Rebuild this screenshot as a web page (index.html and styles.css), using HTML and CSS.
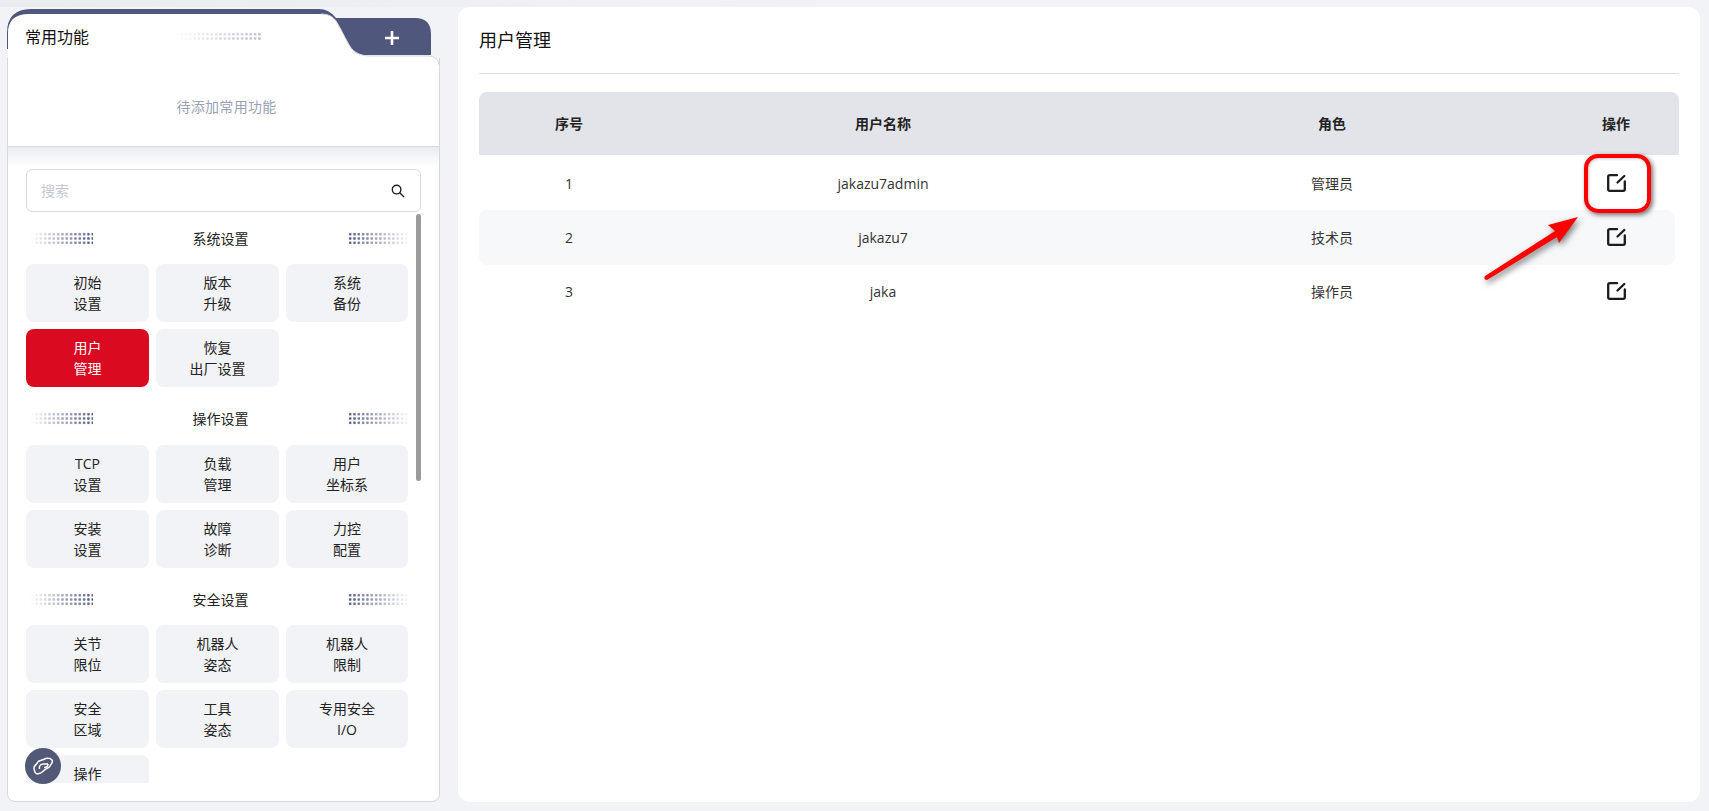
FILE: index.html
```html
<!DOCTYPE html>
<html lang="zh-CN">
<head>
<meta charset="utf-8">
<title>用户管理</title>
<link rel="stylesheet" href="styles.css">
</head>
<body>
<aside class="side">
  <header class="tabs">
    <svg class="tab-shape" width="433" height="56" viewBox="0 0 433 56" aria-hidden="true">
      <path class="tab-dark" d="M0 24Q0 0 24 0H312Q322 0 329 9H408Q424 9 424 25V46H340V40H0Z"/>
      <path class="tab-white" d="M1 56V24Q1 5 22 5H314C322 5 326 8 329 12C334 20 337 27 341 34C345 42 351 47 364 47H420Q432 47 432 56Z"/>
      <path class="tab-edge" d="M314 5C322 5 326 8 329 12C334 20 337 27 341 34C345 42 351 47 364 47H420Q432 47 432 56"/>
      <path class="tab-plus" d="M378 29H392M385 22V36"/>
    </svg>
    <span class="tab-label">常用功能</span>
    <span class="dots dots-tab"></span>
  </header>
  <div class="favs">待添加常用功能</div>
  <div class="menu">
    <div class="search">
      <span class="search-ph">搜索</span>
      <svg class="search-icon" width="14" height="14" viewBox="0 0 14 14" aria-hidden="true"><circle cx="5.6" cy="5.6" r="4.3"/><path d="M8.8 8.8L13 13"/></svg>
    </div>
    <div class="list">
      <section class="group">
        <h3 class="group-title"><span class="dots dots-l"></span><span>系统设置</span><span class="dots dots-r"></span></h3>
        <div class="grid">
          <a class="tile">初始<br>设置</a><a class="tile">版本<br>升级</a><a class="tile">系统<br>备份</a>
          <a class="tile tile-on">用户<br>管理</a><a class="tile">恢复<br>出厂设置</a>
        </div>
      </section>
      <section class="group">
        <h3 class="group-title"><span class="dots dots-l"></span><span>操作设置</span><span class="dots dots-r"></span></h3>
        <div class="grid">
          <a class="tile">TCP<br>设置</a><a class="tile">负载<br>管理</a><a class="tile">用户<br>坐标系</a>
          <a class="tile">安装<br>设置</a><a class="tile">故障<br>诊断</a><a class="tile">力控<br>配置</a>
        </div>
      </section>
      <section class="group">
        <h3 class="group-title"><span class="dots dots-l"></span><span>安全设置</span><span class="dots dots-r"></span></h3>
        <div class="grid">
          <a class="tile">关节<br>限位</a><a class="tile">机器人<br>姿态</a><a class="tile">机器人<br>限制</a>
          <a class="tile">安全<br>区域</a><a class="tile">工具<br>姿态</a><a class="tile">专用安全<br>I/O</a>
          <a class="tile">操作<br>&nbsp;</a>
        </div>
      </section>
      <span class="thumb"></span>
    </div>
    <button class="fab" aria-label="link">
      <svg width="21" height="18" viewBox="0 0 21 18" aria-hidden="true">
        <path d="M1 11.500C.5 8.500 3.500 8 4.500 5.500C5.500 3 8.500 3.500 10.500 2.500C13 1 17 .5 19 3C20.500 5.500 18 7 17 9C16 11.500 13.500 11 11.500 13C9.500 15 6 17.500 3 16.500C1.500 15.500 1.300 13.500 1 11.500Z"/>
        <path d="M6.500 12C5.800 9 7.500 7 10.500 7H15M15 7C15 9.500 13.500 10.500 11 10.500"/>
      </svg>
    </button>
  </div>
</aside>

<main class="main">
  <h1 class="title">用户管理</h1>
  <div class="table">
    <div class="row row-head"><span>序号</span><span>用户名称</span><span>角色</span><span>操作</span></div>
    <div class="row"><span>1</span><span>jakazu7admin</span><span>管理员</span>
      <svg class="edit" width="19" height="18" viewBox="0 0 19 18" aria-hidden="true"><path d="M10 1.200H2.700Q1.200 1.200 1.200 2.700V15.300Q1.200 16.800 2.700 16.800H16.300Q17.800 16.800 17.800 15.300V7.500"/><path d="M10.500 8.500L17.300 2"/></svg></div>
    <div class="row row-alt"><span>2</span><span>jakazu7</span><span>技术员</span>
      <svg class="edit" width="19" height="18" viewBox="0 0 19 18" aria-hidden="true"><path d="M10 1.200H2.700Q1.200 1.200 1.200 2.700V15.300Q1.200 16.800 2.700 16.800H16.300Q17.800 16.800 17.800 15.300V7.500"/><path d="M10.500 8.500L17.300 2"/></svg></div>
    <div class="row row-last"><span>3</span><span>jaka</span><span>操作员</span>
      <svg class="edit" width="19" height="18" viewBox="0 0 19 18" aria-hidden="true"><path d="M10 1.200H2.700Q1.200 1.200 1.200 2.700V15.300Q1.200 16.800 2.700 16.800H16.300Q17.800 16.800 17.800 15.300V7.500"/><path d="M10.500 8.500L17.300 2"/></svg></div>
  </div>
  <span class="mark"></span>
  <svg class="arrow" width="110" height="80" viewBox="0 0 110 80" aria-hidden="true">
    <path d="M5 65L75 20L68 14L98 6L79 32L77 26L7 69Q3 69 5 65Z"/>
  </svg>
</main>
</body>
</html>
```
FILE: styles.css
```css
* { box-sizing: border-box; }
html, body { height: 100%; }
body {
  margin: 0;
  height: 811px;
  overflow: hidden;
  display: flex;
  gap: 18px;
  padding: 7px 9px 9px 7px;
  background: linear-gradient(to right, #ebecef, #f2f3f6 900px) no-repeat 0 0 / 100% 7px #f2f3f6;
  color: #222;
  font: 14px/21px "Open Sans", "Noto Sans CJK SC", sans-serif;
}

/* left column */
.side {
  width: 433px;
  flex: none;
  display: flex;
  flex-direction: column;
  padding-top: 2px;
}
.tabs {
  position: relative;
  height: 49px;
  flex: none;
}
.tab-shape { position: absolute; left: 0; top: 0; }
.tab-dark { fill: #50577d; }
.tab-white { fill: #fff; }
.tab-edge { fill: none; stroke: #d5d8e0; stroke-width: 1; }
.tab-plus { fill: none; stroke: #fff; stroke-width: 2.6; }
.tab-label {
  position: absolute;
  left: 18px;
  top: 16px;
  font-size: 16px;
  line-height: 24px;
  color: #111;
}
.dots {
  display: block;
  background-image: radial-gradient(circle at center, #525a82 0 1.1px, transparent 1.5px);
  background-size: 4.33px 4.33px;
}
.dots-tab {
  position: absolute;
  left: 168px;
  top: 23px;
  width: 87px;
  height: 9px;
  opacity: .4;
  -webkit-mask-image: linear-gradient(to right, transparent, #000);
  mask-image: linear-gradient(to right, transparent, #000);
}
.favs {
  height: 88px;
  flex: none;
  background: #fff;
  border: solid #d5d8e0;
  border-width: 0 1px;
  padding: 38px 0 0 6px;
  text-align: center;
  letter-spacing: .3px;
  color: #9aa1b5;
}
.menu {
  position: relative;
  flex: 1;
  min-height: 0;
  display: flex;
  flex-direction: column;
  padding: 22px 18px 18px 18px;
  background: linear-gradient(#eaecf0, #fff 20px);
  border: 1px solid #d5d8e0;
  border-radius: 0 0 8px 8px;
}
.search {
  height: 43px;
  flex: none;
  display: flex;
  align-items: center;
  justify-content: space-between;
  padding: 0 15px 0 14px;
  background: #fff;
  border: 1px solid #d8dae0;
  border-radius: 6px;
  color: #c4c7cf;
}
.search-icon { fill: none; stroke: #222; stroke-width: 1.4; }
.list {
  position: relative;
  flex: 1;
  min-height: 0;
  overflow: hidden;
  margin-top: 2px;
}
.thumb {
  position: absolute;
  right: 0;
  top: 0;
  width: 5px;
  height: 267px;
  border-radius: 3px;
  background: #9b9b9b;
}
.group { margin-bottom: 7.5px; }
.group-title {
  height: 50px;
  margin: 0;
  width: 385px;
  padding: 0 0 2px 4px;
  display: flex;
  align-items: center;
  justify-content: space-between;
  font-size: 14px;
  font-weight: 400;
  color: #222;
}
.dots-l, .dots-r { width: 63px; height: 13px; }
.dots-l {
  -webkit-mask-image: linear-gradient(to right, transparent, #000);
  mask-image: linear-gradient(to right, transparent, #000);
}
.dots-r {
  -webkit-mask-image: linear-gradient(to left, transparent, #000);
  mask-image: linear-gradient(to left, transparent, #000);
}
.grid {
  width: 382px;
  display: grid;
  grid-template-columns: 123px 123px 122px;
  grid-auto-rows: 58px;
  gap: 7px;
}
.tile {
  display: flex;
  align-items: center;
  justify-content: center;
  text-align: center;
  background: #f2f3f7;
  border-radius: 8px;
  color: #222;
}
.tile-on { background: #da0a21; color: #fff; }
.fab {
  position: absolute;
  left: 17px;
  bottom: 17px;
  width: 36px;
  height: 36px;
  padding: 0;
  display: flex;
  align-items: center;
  justify-content: center;
  border: 0;
  border-radius: 50%;
  background: #525876;
}
.fab path { fill: none; stroke: #fff; stroke-width: 1.5; stroke-linejoin: round; }

/* right panel */
.main {
  position: relative;
  flex: 1;
  min-width: 0;
  padding: 0 21px;
  background: #fff;
  border-radius: 12px;
}
.title {
  height: 67px;
  margin: 0;
  padding-top: 20px;
  font-size: 18px;
  font-weight: 400;
  line-height: 27px;
  color: #111;
  border-bottom: 1px solid #dcdde1;
}
.table { margin-top: 18px; }
.row {
  display: grid;
  grid-template-columns: 180px 448px 450px 118px;
  width: 1196px;
  height: 54px;
  align-items: center;
  justify-items: center;
  color: #333;
}
.row-head {
  width: auto;
  height: 63px;
  margin-bottom: 2px;
  font-weight: 700;
  color: #222;
  background: #e3e4e9;
  border-radius: 8px 8px 0 0;
}
.row-head + .row { height: 53px; }
.row-alt { height: 55px; background: #f7f8fa; border-radius: 8px; }
.row-last { height: 52px; }
.edit { margin-top: -1px; fill: none; stroke: #1c1c1c; stroke-width: 2.3; stroke-linecap: round; }
.mark {
  position: absolute;
  left: 1126px;
  top: 147px;
  width: 67px;
  height: 59px;
  border: 4px solid #f00;
  border-radius: 14px;
  box-shadow: 2px 2px 5px rgba(0, 0, 0, .55), inset 1px 1px 3px rgba(0, 0, 0, .2);
}
.arrow {
  position: absolute;
  left: 1022px;
  top: 204px;
  filter: drop-shadow(2px 3px 3px rgba(0, 0, 0, .5));
}
.arrow path { fill: #f00; }
```
